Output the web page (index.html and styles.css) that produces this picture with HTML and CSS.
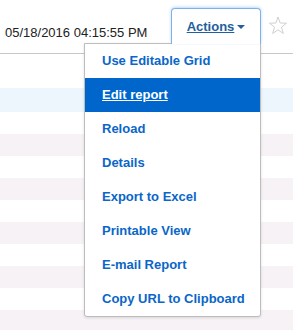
FILE: index.html
```html
<!DOCTYPE html>
<html>
<head>
<meta charset="utf-8">
<link rel="stylesheet" href="styles.css">
</head>
<body>
<div class="page">
  <header class="toolbar">
    <span class="stamp">05/18/2016 04:15:55 PM</span>
    <div class="actions">
      <button class="actions-btn"><span class="actions-label">Actions</span><span class="caret"></span></button>
      <ul class="menu">
        <li class="item">Use Editable Grid</li>
        <li class="item active">Edit report</li>
        <li class="item">Reload</li>
        <li class="item">Details</li>
        <li class="item">Export to Excel</li>
        <li class="item">Printable View</li>
        <li class="item">E-mail Report</li>
        <li class="item">Copy URL to Clipboard</li>
      </ul>
    </div>
    <svg class="star" width="18" height="19" viewBox="0 0 18 19">
      <polygon points="9,1 11.2,7 17.5,7.2 12.5,11.2 14.3,17.5 9,13.8 3.7,17.5 5.5,11.2 0.5,7.2 6.8,7" fill="none" stroke="#cfcfcf" stroke-width="1"/>
    </svg>
  </header>
  <div class="grid">
    <div class="row head"></div>
    <div class="row selected"></div>
    <div class="row"></div>
    <div class="row odd"></div>
    <div class="row"></div>
    <div class="row odd"></div>
    <div class="row"></div>
    <div class="row odd"></div>
    <div class="row"></div>
    <div class="row odd"></div>
    <div class="row"></div>
    <div class="row odd"></div>
  </div>
</div>
</body>
</html>
```
FILE: styles.css
```css
html, body {
  margin: 0;
  padding: 0;
  background: #fff;
  font-family: "Liberation Sans", Arial, sans-serif;
}
.page {
  width: 293px;
  height: 330px;
  overflow: hidden;
}
.toolbar {
  display: flex;
  align-items: flex-start;
  height: 45px;
  padding-top: 8px;
  border-bottom: 1px solid #c8c8c8;
  box-sizing: content-box;
}
.stamp {
  margin-left: 5px;
  margin-top: 17px;
  font-size: 13px;
  line-height: 15px;
  color: #222;
  white-space: nowrap;
}
.actions {
  position: relative;
  margin-left: auto;
  width: 90px;
  height: 36px;
}
.actions-btn {
  position: relative;
  z-index: 2;
  display: flex;
  align-items: center;
  justify-content: center;
  box-sizing: border-box;
  width: 90px;
  height: 36px;
  margin: 0;
  padding: 0 0 1px 0;
  background: #fff;
  border: 1px solid #7db3ea;
  border-bottom: none;
  border-radius: 4px 4px 0 0;
  box-shadow: 0 -1px 3px rgba(102, 170, 235, 0.45);
  font-family: "Liberation Sans", Arial, sans-serif;
}
.actions-label {
  font-size: 13px;
  font-weight: bold;
  color: #235f9c;
  text-decoration: underline;
  line-height: 15px;
}
.caret {
  width: 0;
  height: 0;
  margin-left: 3px;
  margin-top: 1px;
  border-left: 4px solid transparent;
  border-right: 4px solid transparent;
  border-top: 4px solid #235f9c;
}
.menu {
  position: absolute;
  z-index: 1;
  top: 35px;
  right: 0;
  width: 177px;
  box-sizing: border-box;
  margin: 0;
  padding: 0;
  list-style: none;
  background: #fff;
  border: 1px solid #bdbdbd;
  border-radius: 0 0 3px 3px;
  box-shadow: 0 1px 3px rgba(0, 0, 0, 0.12);
}
.item {
  height: 34px;
  line-height: 34px;
  padding-left: 17px;
  font-size: 13px;
  font-weight: bold;
  color: #0a66c8;
  white-space: nowrap;
}
.item.active {
  background: #0066cc;
  color: #fff;
  text-decoration: underline;
}
.star {
  margin: 8px 6px 0 8px;
}
.grid {
  display: flex;
  flex-direction: column;
}
.row {
  height: 22px;
  background: #fff;
}
.row.head {
  height: 34px;
}
.row.selected {
  height: 24px;
  background: #edf5fd;
}
.row.odd {
  background: #f6f2f5;
}
```
